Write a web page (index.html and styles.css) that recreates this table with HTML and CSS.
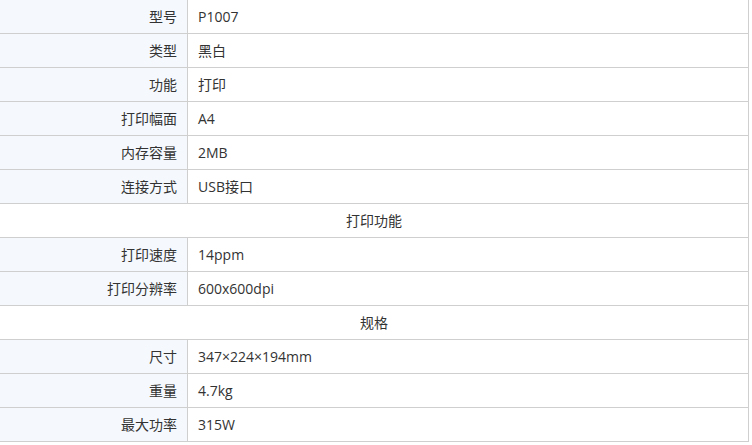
FILE: index.html
```html
<!DOCTYPE html>
<html lang="zh-CN">
<head>
<meta charset="utf-8">
<title>P1007 参数</title>
<link rel="stylesheet" href="styles.css">
</head>
<body>
<table class="spec">
  <colgroup><col class="col-label"><col class="col-value"></colgroup>
  <tbody>
    <tr><th>型号</th><td>P1007</td></tr>
    <tr><th>类型</th><td>黑白</td></tr>
    <tr><th>功能</th><td>打印</td></tr>
    <tr><th>打印幅面</th><td>A4</td></tr>
    <tr><th>内存容量</th><td>2MB</td></tr>
    <tr><th>连接方式</th><td>USB接口</td></tr>
    <tr class="section"><td colspan="2">打印功能</td></tr>
    <tr><th>打印速度</th><td>14ppm</td></tr>
    <tr><th>打印分辨率</th><td>600x600dpi</td></tr>
    <tr class="section"><td colspan="2">规格</td></tr>
    <tr><th>尺寸</th><td>347×224×194mm</td></tr>
    <tr><th>重量</th><td>4.7kg</td></tr>
    <tr><th>最大功率</th><td>315W</td></tr>
  </tbody>
</table>
</body>
</html>
```
FILE: styles.css
```css
html, body {
  margin: 0;
  padding: 0;
  background: #fff;
}
body {
  font-family: "Open Sans", "Noto Sans CJK SC", sans-serif;
  font-size: 14px;
  color: #333;
}
.spec {
  border-collapse: collapse;
  table-layout: fixed;
  width: 750px;
  margin: -1px 0 0 -1px;
}
.col-label { width: 188px; }
.spec th,
.spec td {
  border: 1px solid #cfcfcf;
  height: 34px;
  padding: 0 10px;
  box-sizing: border-box;
  vertical-align: middle;
  line-height: 20px;
  font-weight: normal;
}
.spec th {
  text-align: right;
  background: #f5f9fd;
}
.spec td {
  text-align: left;
}
.spec .section td {
  text-align: center;
}
```
